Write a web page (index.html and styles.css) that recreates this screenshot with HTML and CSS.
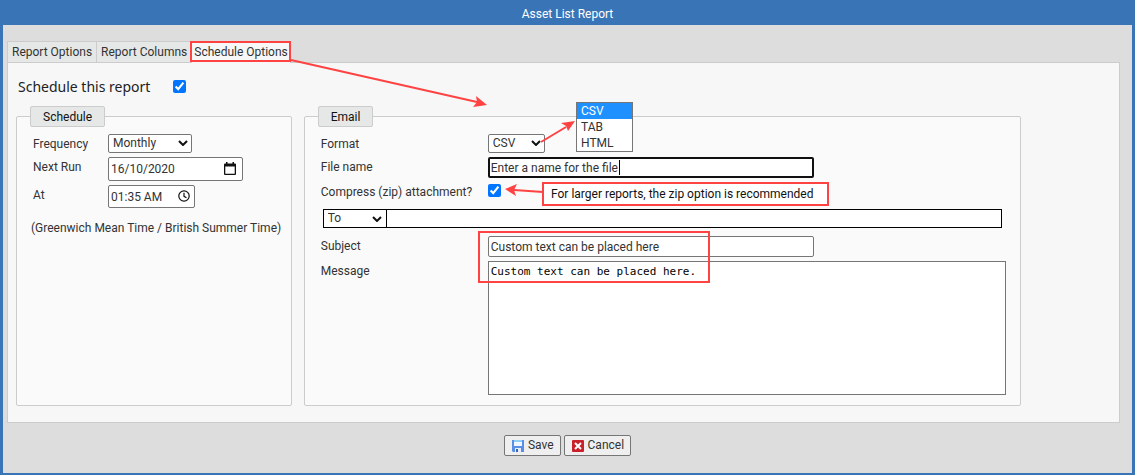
FILE: index.html
```html
<!DOCTYPE html>
<html lang="en-GB">
<head>
<meta charset="utf-8">
<title>Asset List Report</title>
<link rel="stylesheet" href="styles.css">
</head>
<body>
<div class="window">
  <header class="titlebar"><h1 class="title">Asset List Report</h1></header>
  <main class="content">
    <nav class="tabs">
      <button type="button" class="tab">Report Options</button>
      <button type="button" class="tab">Report Columns</button>
      <button type="button" class="tab tab-active">Schedule Options</button>
    </nav>
    <form class="form">
      <section class="panel">
        <div class="enable">
          <label for="enable">Schedule this report</label>
          <input type="checkbox" class="check" id="enable" checked>
        </div>
        <div class="groups">
          <fieldset class="group">
            <legend class="legend">Schedule</legend>
            <div class="fields schedule-fields">
              <label class="label" for="frequency">Frequency</label>
              <div class="cell">
                <span class="select-wrap">
                  <select class="control select frequency" id="frequency"><option>Monthly</option></select>
                  <svg class="chevron" viewBox="0 0 10 6"><path d="M1 1l4 4 4-4"/></svg>
                </span>
              </div>
              <label class="label" for="next-run">Next Run</label>
              <div class="cell">
                <span class="select-wrap">
                  <input class="control date" id="next-run" type="text" value="16/10/2020">
                  <svg class="calendar" viewBox="0 0 12 13"><path fill-rule="evenodd" d="M2 0h1.500v1.500h5V0H10v1.500h1q1 0 1 1V12q0 1-1 1H1q-1 0-1-1V2.500q0-1 1-1h1zM1.300 4.500v7.200h9.400V4.500z"/></svg>
                </span>
              </div>
              <label class="label" for="at">At</label>
              <div class="cell">
                <span class="select-wrap">
                  <input class="control time" id="at" type="text" value="01:35 AM">
                  <svg class="clock" viewBox="0 0 12 12"><circle cx="6" cy="6" r="5.200"/><path d="M6 2.800v3.500l2.500 1.500"/></svg>
                </span>
              </div>
            </div>
            <p class="zone">(Greenwich Mean Time / British Summer Time)</p>
          </fieldset>
          <fieldset class="group email">
            <legend class="legend">Email</legend>
            <div class="fields email-fields">
              <label class="label" for="format">Format</label>
              <div class="cell">
                <span class="select-wrap">
                  <select class="control select format" id="format"><option>CSV</option><option>TAB</option><option>HTML</option></select>
                  <svg class="chevron" viewBox="0 0 10 6"><path d="M1 1l4 4 4-4"/></svg>
                </span>
              </div>
              <label class="label" for="file-name">File name</label>
              <div class="cell file-cell">
                <input class="control text focused" id="file-name" type="text" value="Enter a name for the file">
                <span class="caret"></span>
              </div>
              <label class="label" for="zip">Compress (zip) attachment?</label>
              <div class="cell check-cell"><input type="checkbox" class="check" id="zip" checked></div>
            </div>
            <div class="recipients">
              <span class="select-wrap">
                <select class="select to" aria-label="Recipient type"><option>To</option></select>
                <svg class="chevron" viewBox="0 0 10 6"><path d="M1 1l4 4 4-4"/></svg>
              </span>
              <input class="addresses" type="text" aria-label="Recipients">
            </div>
            <div class="fields email-fields">
              <label class="label" for="subject">Subject</label>
              <div class="cell"><input class="control text" id="subject" type="text" value="Custom text can be placed here"></div>
              <label class="label" for="message">Message</label>
              <textarea class="control message" id="message">Custom text can be placed here.</textarea>
            </div>
          </fieldset>
        </div>
      </section>
      <div class="actions">
        <button type="button" class="action">
          <svg class="action-icon" viewBox="0 0 12 12"><path fill="#5a8fe6" d="M0 0h12v12H1l-1-1z"/><path fill="#eef7ff" d="M2 0h8v6H2z"/><path fill="#8ccff7" d="M2 0h8v2H2z"/><path fill="#e8eef8" d="M3 8h6v4H3z"/><path fill="#3564b8" d="M4 9h2v3H4z"/></svg>
          Save
        </button>
        <button type="button" class="action">
          <svg class="action-icon" viewBox="0 0 12 12"><rect width="12" height="12" rx="1" fill="#c9202b"/><path d="M3 3l6 6M9 3l-6 6" stroke="#fff" stroke-width="2"/></svg>
          Cancel
        </button>
      </div>
    </form>
  </main>
  <ul class="option-list">
    <li class="option option-selected">CSV</li>
    <li class="option">TAB</li>
    <li class="option">HTML</li>
  </ul>
  <svg class="arrows" viewBox="0 0 850 300">
    <g class="shaft"><path d="M291 60L477 102M541 142L566 127M543 192L514 190"/></g>
    <g class="head"><path d="M487 105l-14 2 4-5-1-6zM575 121l-7 10-2-5-5-3zM505 189l12-5-3 6 2 6z"/></g>
  </svg>
  <div class="mark mark-tab"></div>
  <div class="mark mark-text"></div>
  <div class="mark note">For larger reports, the zip option is recommended</div>
</div>
</body>
</html>
```

FILE: styles.css
```css
* { box-sizing: border-box; }
body {
  margin: 0;
  font: 12px/19px Roboto, "Noto Sans", sans-serif;
  color: #333;
}
button, input, select { font: inherit; color: inherit; margin: 0; }
.window {
  position: relative;
  display: flex;
  flex-direction: column;
  min-height: 100vh;
  padding: 0 3px 2px;
  background: #3974b7;
}
.titlebar { height: 25px; padding-top: 5px; text-align: center; color: #fff; }
.title { margin: 0; font: inherit; }
.content { flex: 1; padding: 16px 12px 16px 4px; background: #ddd; }
.tabs { display: flex; }
.tab {
  height: 22px;
  margin-bottom: -1px;
  padding: 0 4px;
  border: 1px solid #ccc;
  border-right: 0;
  background: #e5e8e7;
}
.tab-active { background: #f7f7f7; border-bottom: 0; padding: 0 2px; }
.panel {
  padding: 14px 0 16px 8px;
  border: 1px solid #ccc;
  background: #f7f7f7;
}
.enable {
  display: flex;
  align-items: center;
  gap: 23px;
  height: 18px;
  padding-left: 2px;
  font-family: "Noto Sans", sans-serif;
  font-size: 14px;
  color: #222;
}
.check { width: 13px; height: 13px; margin: 0; accent-color: #0075ff; }
.groups {
  display: grid;
  grid-template-columns: 25% 65%;
  column-gap: 12px;
  padding-top: 11px;
}
.group {
  min-width: 0;
  margin: 0;
  padding: 7px 14px 10px 16px;
  border: 1px solid #ccc;
  border-radius: 2px;
  background: #fafafa;
}
.legend {
  height: 21px;
  margin-left: -3px;
  padding: 1px 12px 0;
  border: 1px solid #ccc;
  border-radius: 2px;
  background: #e5e8e7;
  color: #111;
}
.fields { display: grid; row-gap: 4px; align-items: start; }
.label { padding-top: 2px; line-height: 17px; }
.schedule-fields { grid-template-columns: 75px 1fr; }
.email-fields { grid-template-columns: 167px 1fr; }
.cell { display: flex; }
.control { border: 1px solid #767676; border-radius: 2px; background: #fff; }
.select-wrap { position: relative; display: flex; }
.select { height: 19px; padding: 0 4px; appearance: none; line-height: 17px; }
.frequency { width: 84px; }
.format { width: 57px; }
.chevron {
  position: absolute;
  right: 4px;
  top: 6px;
  width: 10px;
  height: 6px;
  fill: none;
  stroke: #111;
  stroke-width: 2;
  pointer-events: none;
}
.date { width: 135px; height: 24px; padding: 0 2px; }
.time { width: 87px; height: 23px; padding: 0 2px; }
.calendar { position: absolute; right: 7px; top: 5px; width: 12px; height: 13px; fill: #111; }
.clock { position: absolute; right: 5px; top: 5px; width: 12px; height: 12px; fill: none; stroke: #111; stroke-width: 1.2; }
.zone { margin: 11px -2px 0; white-space: nowrap; }
.text { width: 326px; height: 21px; padding: 0 2px; }
.focused { border: 2px solid #101010; padding: 0 1px; }
.file-cell { position: relative; }
.caret { position: absolute; left: 131px; top: 3px; width: 1px; height: 15px; background: #000; }
.check-cell { padding: 2px 0 4px; }
.recipients {
  display: flex;
  height: 19px;
  margin: 8px 4px 8px 2px;
  border: 1px solid #000;
  background: #fff;
}
.to { width: 63px; height: 17px; border: 0; border-right: 1px solid #000; background: #fff; }
.recipients .chevron { right: 5px; }
.addresses { flex: 1; min-width: 0; border: 0; background: #fff; }
.message {
  width: 100%;
  height: 134px;
  padding: 3px 2px;
  border-radius: 0;
  resize: none;
  font: 11px/14px "DejaVu Sans Mono", monospace;
  color: #000;
}
.actions { display: flex; justify-content: center; gap: 3px; padding: 12px 0 0 8px; }
.action {
  display: flex;
  align-items: center;
  gap: 4px;
  height: 21px;
  padding: 0 6px 0 7px;
  border: 1px solid #767676;
  border-radius: 2px;
  background: #efefef;
}
.action-icon { width: 12px; height: 12px; }
.option-list {
  position: absolute;
  left: 576px;
  top: 102px;
  width: 57px;
  margin: 0;
  padding: 0;
  border: 1px solid #767676;
  background: #fff;
  list-style: none;
  line-height: 16px;
}
.option { padding-left: 4px; }
.option-selected { background: #1e90ff; color: #fff; }
.arrows { position: absolute; left: 0; top: 0; width: 850px; height: 300px; pointer-events: none; }
.shaft { fill: none; stroke: #ff4343; stroke-width: 2; }
.head { fill: #ff4343; }
.mark { position: absolute; border: 2px solid #ff4343; pointer-events: none; }
.mark-tab { left: 190px; top: 41px; width: 101px; height: 21px; }
.mark-text { left: 478px; top: 231px; width: 232px; height: 52px; }
.note {
  left: 542px;
  top: 182px;
  width: 287px;
  height: 24px;
  padding: 1px 0 0 7px;
  background: #fff;
  color: #111;
  white-space: nowrap;
}
```
